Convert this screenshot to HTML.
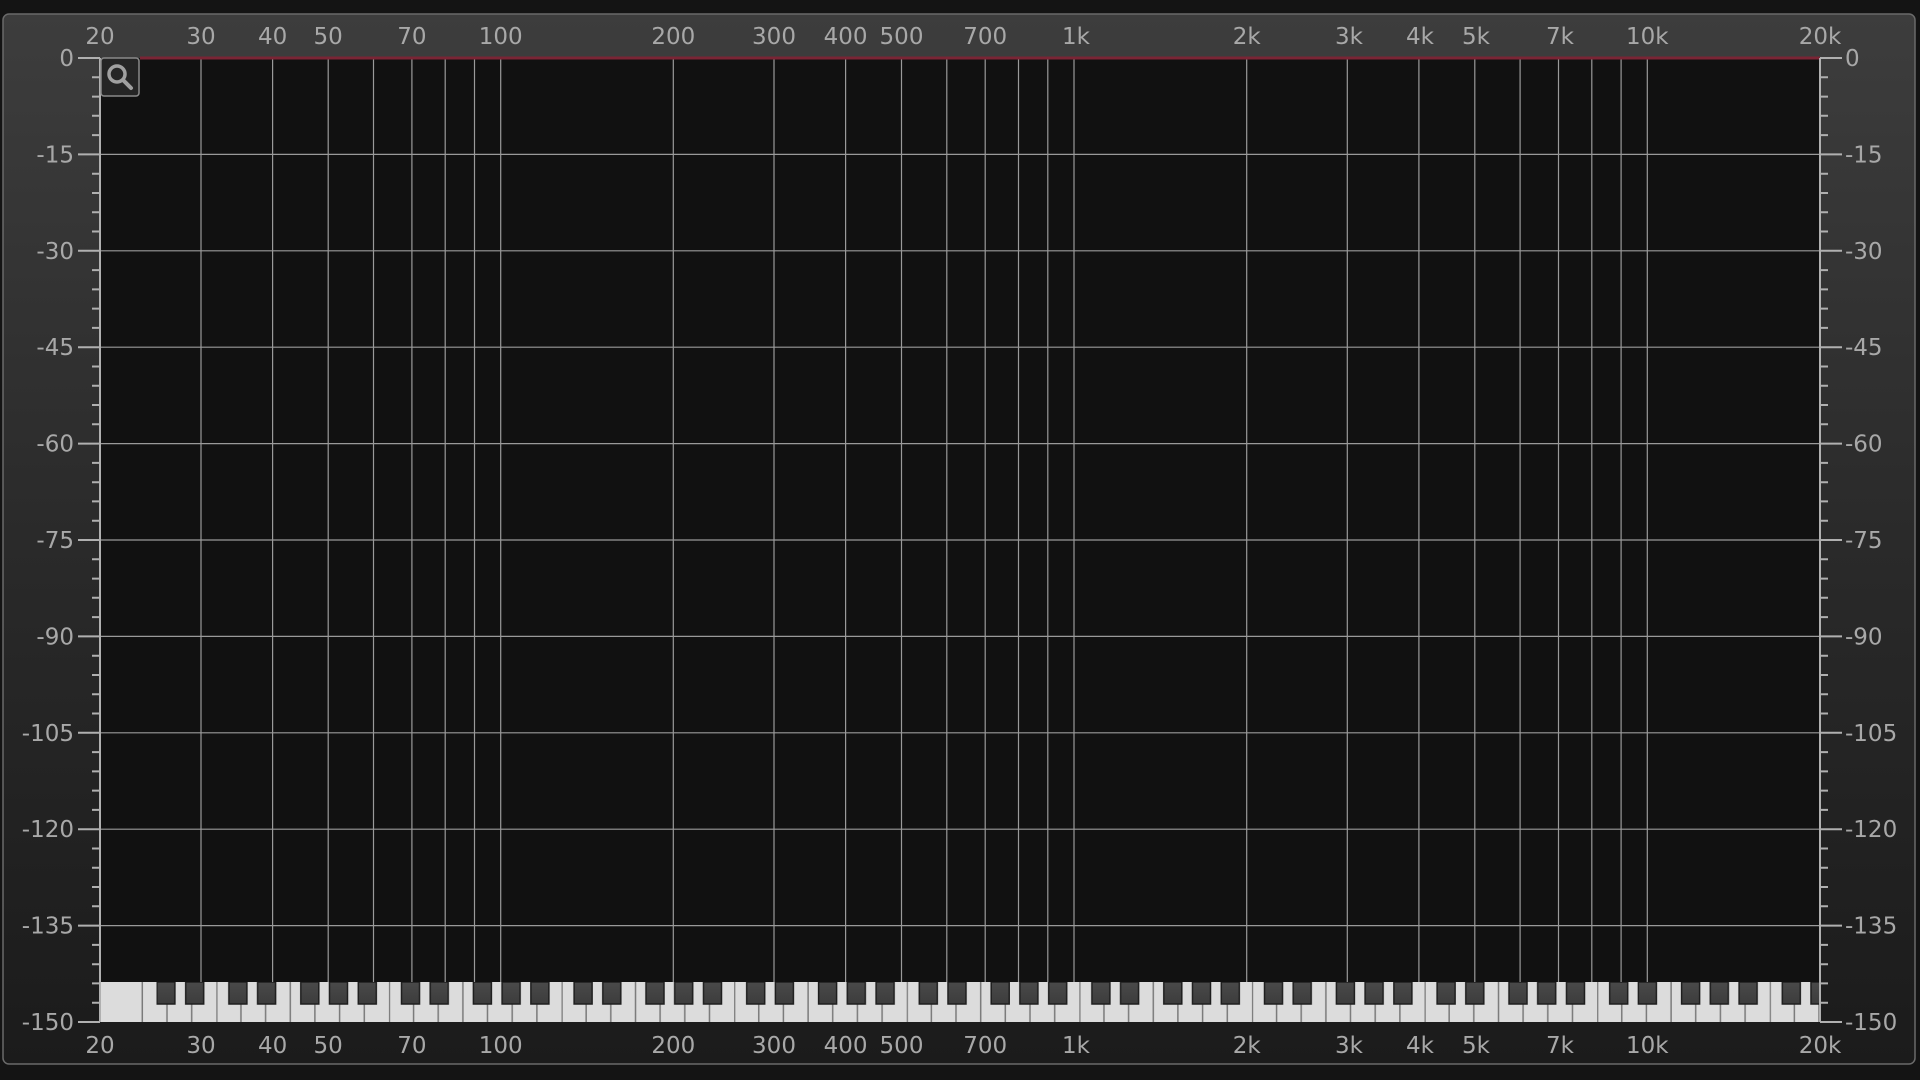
<!DOCTYPE html>
<html><head><meta charset="utf-8"><style>
html,body{margin:0;padding:0;background:#141414;width:1920px;height:1080px;overflow:hidden}
svg text{font-family:"DejaVu Sans","Liberation Sans",sans-serif;font-size:23px;fill:#a8a8a8}
</style></head><body>
<svg width="1920" height="1080" xmlns="http://www.w3.org/2000/svg">
<defs>
<linearGradient id="pg" x1="0" y1="0" x2="0" y2="1">
<stop offset="0" stop-color="#3d3d3d"/><stop offset="0.5" stop-color="#2a2a2a"/><stop offset="1" stop-color="#1b1b1b"/>
</linearGradient>
<linearGradient id="bk" x1="0" y1="0" x2="0" y2="1">
<stop offset="0" stop-color="#4a4a4a"/><stop offset="1" stop-color="#3c3c3c"/>
</linearGradient>
<pattern id="oct" patternUnits="userSpaceOnUse" x="43.7" y="982" width="172.6" height="40">
<rect x="0" y="0" width="172.6" height="40" fill="#dcdcdc"/>
<g stroke="#7a7a7a" stroke-width="1.5">
<line x1="0.5" y1="0" x2="0.5" y2="40"/><line x1="24.66" y1="0" x2="24.66" y2="40"/><line x1="49.3" y1="0" x2="49.3" y2="40"/><line x1="74" y1="0" x2="74" y2="40"/><line x1="98.6" y1="0" x2="98.6" y2="40"/><line x1="123.3" y1="0" x2="123.3" y2="40"/><line x1="148" y1="0" x2="148" y2="40"/>
</g>
<g fill="url(#bk)" stroke="#1e1e1e" stroke-width="1.5">
<rect x="12.6" y="0" width="18" height="22"/><rect x="41.3" y="0" width="18" height="22"/><rect x="84.5" y="0" width="18" height="22"/><rect x="113.2" y="0" width="18" height="22"/><rect x="142" y="0" width="18" height="22"/>
</g>
</pattern>
</defs>
<rect x="3" y="14" width="1912" height="1050" rx="6" fill="url(#pg)" stroke="#6a6a6a" stroke-width="1.5"/>
<rect x="100" y="58" width="1720" height="964" fill="#111"/>
<g stroke="#9a9a9a" stroke-width="1.2">
<line x1="201" y1="58" x2="201" y2="1022"/><line x1="272.6" y1="58" x2="272.6" y2="1022"/><line x1="328.2" y1="58" x2="328.2" y2="1022"/><line x1="373.5" y1="58" x2="373.5" y2="1022"/><line x1="411.9" y1="58" x2="411.9" y2="1022"/><line x1="445.2" y1="58" x2="445.2" y2="1022"/><line x1="474.5" y1="58" x2="474.5" y2="1022"/><line x1="500.7" y1="58" x2="500.7" y2="1022"/>
<line x1="673.3" y1="58" x2="673.3" y2="1022"/><line x1="774" y1="58" x2="774" y2="1022"/><line x1="845.6" y1="58" x2="845.6" y2="1022"/><line x1="901.5" y1="58" x2="901.5" y2="1022"/><line x1="946.8" y1="58" x2="946.8" y2="1022"/><line x1="985.2" y1="58" x2="985.2" y2="1022"/><line x1="1018.5" y1="58" x2="1018.5" y2="1022"/><line x1="1047.8" y1="58" x2="1047.8" y2="1022"/><line x1="1074" y1="58" x2="1074" y2="1022"/>
<line x1="1246.7" y1="58" x2="1246.7" y2="1022"/><line x1="1347.3" y1="58" x2="1347.3" y2="1022"/><line x1="1418.9" y1="58" x2="1418.9" y2="1022"/><line x1="1474.8" y1="58" x2="1474.8" y2="1022"/><line x1="1520.1" y1="58" x2="1520.1" y2="1022"/><line x1="1558.5" y1="58" x2="1558.5" y2="1022"/><line x1="1591.8" y1="58" x2="1591.8" y2="1022"/><line x1="1621.1" y1="58" x2="1621.1" y2="1022"/><line x1="1647.3" y1="58" x2="1647.3" y2="1022"/>
<line x1="100" y1="154.4" x2="1820" y2="154.4"/><line x1="100" y1="250.8" x2="1820" y2="250.8"/><line x1="100" y1="347.2" x2="1820" y2="347.2"/><line x1="100" y1="443.6" x2="1820" y2="443.6"/><line x1="100" y1="540" x2="1820" y2="540"/><line x1="100" y1="636.4" x2="1820" y2="636.4"/><line x1="100" y1="732.8" x2="1820" y2="732.8"/><line x1="100" y1="829.2" x2="1820" y2="829.2"/><line x1="100" y1="925.6" x2="1820" y2="925.6"/>
</g>
<line x1="140" y1="58" x2="1820" y2="58" stroke="#7a2535" stroke-width="3"/>
<rect x="100" y="982" width="1720" height="40" fill="url(#oct)"/>
<rect x="100" y="982" width="56.5" height="40" fill="#dcdcdc"/>
<line x1="142.3" y1="982" x2="142.3" y2="1022" stroke="#7a7a7a" stroke-width="1.5"/>
<g stroke="#b0b0b0" stroke-width="2">
<line x1="100" y1="58" x2="100" y2="1022"/><line x1="1820" y1="58" x2="1820" y2="1022"/>
<line x1="78" y1="58" x2="100" y2="58"/><line x1="78" y1="154.4" x2="100" y2="154.4"/><line x1="78" y1="250.8" x2="100" y2="250.8"/><line x1="78" y1="347.2" x2="100" y2="347.2"/><line x1="78" y1="443.6" x2="100" y2="443.6"/><line x1="78" y1="540" x2="100" y2="540"/><line x1="78" y1="636.4" x2="100" y2="636.4"/><line x1="78" y1="732.8" x2="100" y2="732.8"/><line x1="78" y1="829.2" x2="100" y2="829.2"/><line x1="78" y1="925.6" x2="100" y2="925.6"/><line x1="78" y1="1022" x2="100" y2="1022"/>
<line x1="1820" y1="58" x2="1842" y2="58"/><line x1="1820" y1="154.4" x2="1842" y2="154.4"/><line x1="1820" y1="250.8" x2="1842" y2="250.8"/><line x1="1820" y1="347.2" x2="1842" y2="347.2"/><line x1="1820" y1="443.6" x2="1842" y2="443.6"/><line x1="1820" y1="540" x2="1842" y2="540"/><line x1="1820" y1="636.4" x2="1842" y2="636.4"/><line x1="1820" y1="732.8" x2="1842" y2="732.8"/><line x1="1820" y1="829.2" x2="1842" y2="829.2"/><line x1="1820" y1="925.6" x2="1842" y2="925.6"/><line x1="1820" y1="1022" x2="1842" y2="1022"/>
</g>
<g stroke="#b0b0b0" stroke-width="2">
<path d="M92 77.3h8M92 96.6h8M92 115.8h8M92 135.1h8M92 173.7h8M92 193h8M92 212.2h8M92 231.5h8M92 270.1h8M92 289.4h8M92 308.6h8M92 327.9h8M92 366.5h8M92 385.8h8M92 405h8M92 424.3h8M92 462.9h8M92 482.2h8M92 501.4h8M92 520.7h8M92 559.3h8M92 578.6h8M92 597.8h8M92 617.1h8M92 655.7h8M92 675h8M92 694.2h8M92 713.5h8M92 752.1h8M92 771.4h8M92 790.6h8M92 809.9h8M92 848.5h8M92 867.8h8M92 887h8M92 906.3h8M92 944.9h8M92 964.2h8M92 983.4h8M92 1002.7h8"/>
<path transform="translate(1728 0)" d="M92 77.3h8M92 96.6h8M92 115.8h8M92 135.1h8M92 173.7h8M92 193h8M92 212.2h8M92 231.5h8M92 270.1h8M92 289.4h8M92 308.6h8M92 327.9h8M92 366.5h8M92 385.8h8M92 405h8M92 424.3h8M92 462.9h8M92 482.2h8M92 501.4h8M92 520.7h8M92 559.3h8M92 578.6h8M92 597.8h8M92 617.1h8M92 655.7h8M92 675h8M92 694.2h8M92 713.5h8M92 752.1h8M92 771.4h8M92 790.6h8M92 809.9h8M92 848.5h8M92 867.8h8M92 887h8M92 906.3h8M92 944.9h8M92 964.2h8M92 983.4h8M92 1002.7h8"/>
</g>
<rect x="101" y="58" width="38" height="38" rx="3" fill="#252525" stroke="#8a8a8a" stroke-width="1.5"/>
<circle cx="117" cy="74" r="8" fill="none" stroke="#a0a0a0" stroke-width="3.5"/>
<line x1="123" y1="80" x2="131" y2="88" stroke="#a0a0a0" stroke-width="4" stroke-linecap="round"/>
<g text-anchor="middle">
<text x="100" y="44">20</text><text x="201" y="44">30</text><text x="272.6" y="44">40</text><text x="328.2" y="44">50</text><text x="411.9" y="44">70</text><text x="500.7" y="44">100</text><text x="673.3" y="44">200</text><text x="774" y="44">300</text><text x="845.6" y="44">400</text><text x="901.5" y="44">500</text><text x="985.2" y="44">700</text><text x="1076" y="44">1k</text><text x="1246.7" y="44">2k</text><text x="1349" y="44">3k</text><text x="1420" y="44">4k</text><text x="1476" y="44">5k</text><text x="1560" y="44">7k</text><text x="1647.3" y="44">10k</text><text x="1820" y="44">20k</text>
<text x="100" y="1053">20</text><text x="201" y="1053">30</text><text x="272.6" y="1053">40</text><text x="328.2" y="1053">50</text><text x="411.9" y="1053">70</text><text x="500.7" y="1053">100</text><text x="673.3" y="1053">200</text><text x="774" y="1053">300</text><text x="845.6" y="1053">400</text><text x="901.5" y="1053">500</text><text x="985.2" y="1053">700</text><text x="1076" y="1053">1k</text><text x="1246.7" y="1053">2k</text><text x="1349" y="1053">3k</text><text x="1420" y="1053">4k</text><text x="1476" y="1053">5k</text><text x="1560" y="1053">7k</text><text x="1647.3" y="1053">10k</text><text x="1820" y="1053">20k</text>
</g>
<g text-anchor="end">
<text x="74" y="66">0</text><text x="74" y="162.4">-15</text><text x="74" y="258.8">-30</text><text x="74" y="355.2">-45</text><text x="74" y="451.6">-60</text><text x="74" y="548">-75</text><text x="74" y="644.4">-90</text><text x="74" y="740.8">-105</text><text x="74" y="837.2">-120</text><text x="74" y="933.6">-135</text><text x="74" y="1030">-150</text>
</g>
<g text-anchor="start">
<text x="1845" y="66">0</text><text x="1845" y="162.4">-15</text><text x="1845" y="258.8">-30</text><text x="1845" y="355.2">-45</text><text x="1845" y="451.6">-60</text><text x="1845" y="548">-75</text><text x="1845" y="644.4">-90</text><text x="1845" y="740.8">-105</text><text x="1845" y="837.2">-120</text><text x="1845" y="933.6">-135</text><text x="1845" y="1030">-150</text>
</g>
</svg>
</body></html>
